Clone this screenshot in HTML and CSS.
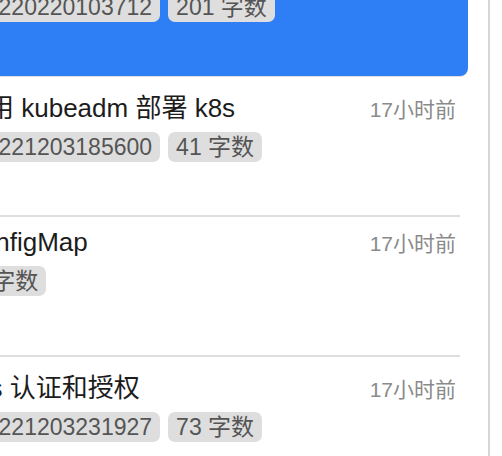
FILE: index.html
```html
<!DOCTYPE html>
<html lang="zh-CN">
<head>
<meta charset="utf-8">
<title>笔记列表</title>
<link rel="stylesheet" href="styles.css">
</head>
<body>
<div class="app">
  <ul class="list">
    <li class="item item-active">
      <div class="item-body">
        <div class="head">
          <span class="title">Kubernetes 学习笔记</span>
          <span class="time">17小时前</span>
        </div>
        <div class="tags">
          <span class="tag">20220220103712</span>
          <span class="tag">201 字数</span>
        </div>
      </div>
    </li>
    <li class="item">
      <div class="item-body">
        <div class="head">
          <span class="title">使用 kubeadm 部署 k8s</span>
          <span class="time">17小时前</span>
        </div>
        <div class="tags">
          <span class="tag">20221203185600</span>
          <span class="tag">41 字数</span>
        </div>
      </div>
    </li>
    <li class="item">
      <div class="item-body">
        <div class="head">
          <span class="title">ConfigMap</span>
          <span class="time">17小时前</span>
        </div>
        <div class="tags">
          <span class="tag">8 字数</span>
        </div>
      </div>
    </li>
    <li class="item">
      <div class="item-body">
        <div class="head">
          <span class="title">k8s 认证和授权</span>
          <span class="time">17小时前</span>
        </div>
        <div class="tags">
          <span class="tag">20221203231927</span>
          <span class="tag">73 字数</span>
        </div>
      </div>
    </li>
  </ul>
  <div class="rule"></div>
</div>
</body>
</html>
```

FILE: styles.css
```css
html, body {
  margin: 0;
  padding: 0;
  width: 502px;
  height: 456px;
  overflow: hidden;
  background: #ffffff;
  font-family: "Liberation Sans", "Noto Sans CJK SC", sans-serif;
}

.app {
  display: flex;
  align-items: stretch;
  height: 456px;
  margin-left: -54px;
}

.list {
  list-style: none;
  margin: -63px 0 0 0;
  padding: 0;
  width: 522px;
  flex: none;
}

.item {
  height: 140px;
  box-sizing: border-box;
  padding: 0 8px 0 16px;
}

.item-body {
  height: 140px;
  box-sizing: border-box;
  padding: 10px 4px 0 0;
  border-bottom: 2px solid #dedede;
}

.item-active {
  height: 139px;
  background: #2e7ef5;
  border-radius: 0 0 8px 0;
  box-shadow: 0 1px 0 rgba(0, 0, 0, 0.12);
  margin-bottom: 1px;
}

.item-active .item-body {
  height: 139px;
  border-bottom-color: transparent;
}

.item-active .title,
.item-active .time {
  color: #ffffff;
}

.head {
  display: flex;
  justify-content: space-between;
  align-items: baseline;
  white-space: nowrap;
}

.title {
  font-size: 26px;
  color: #1c1c1c;
}

.time {
  font-size: 21px;
  color: #8a8a8a;
}

.tags {
  display: flex;
  gap: 8px;
  margin-top: 8px;
  margin-left: 3px;
}

.tag {
  display: inline-flex;
  align-items: center;
  height: 30px;
  line-height: 30px;
  padding: 0 8px;
  border-radius: 7px;
  background: #dedede;
  color: #555555;
  font-size: 23px;
  white-space: nowrap;
}

.rule {
  flex: none;
  width: 2px;
  margin-left: 20px;
  background: #d6d6d6;
}
```
